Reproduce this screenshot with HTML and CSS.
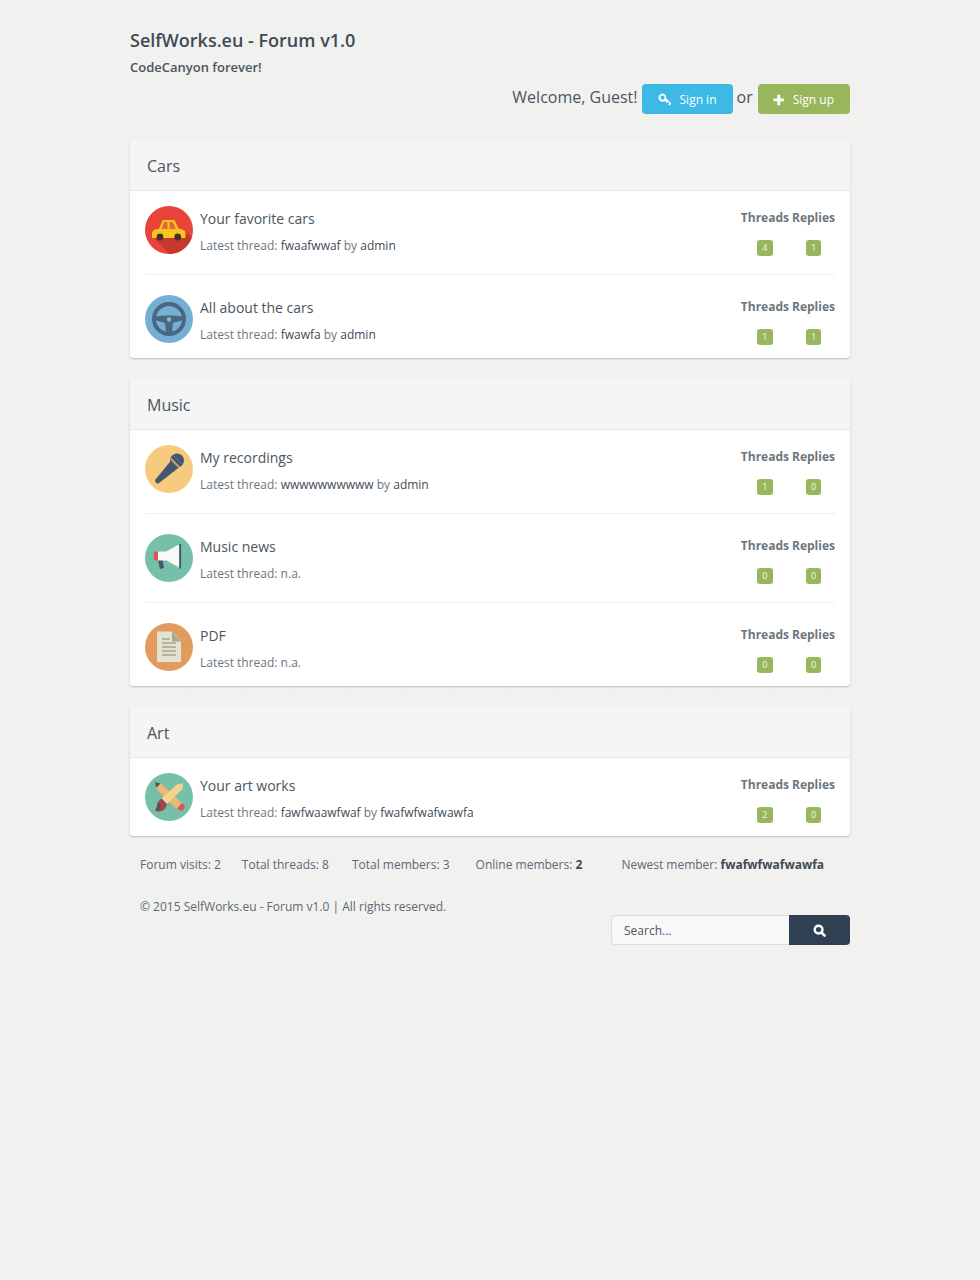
FILE: index.html
```html
<!DOCTYPE html>
<html lang="en">
<head>
<meta charset="utf-8">
<title>SelfWorks.eu - Forum v1.0</title>
<link rel="stylesheet" href="styles.css">
</head>
<body>
<svg class="defs" width="0" height="0" aria-hidden="true">
  <defs>
    <clipPath id="c"><circle cx="24" cy="24" r="24"/></clipPath>
    <symbol id="car" viewBox="0 0 48 48">
      <circle cx="24" cy="24" r="24" fill="#e8443a"/>
      <path clip-path="url(#c)" d="M9 32 L40 26 L50 34 L50 50 L26 50 Z" fill="#c5382f"/>
      <path d="M14 23 L17 15.500 Q17.500 14 19 14 L28 14 Q29.500 14 30 15 L33.500 22.500 L38 23.800 Q40.500 24.500 40.500 27 L40.500 32 L7 32 L7 27 Q7.500 24 10 23.500 Z" fill="#f9c620"/>
      <path d="M19 16 L22.500 16 L22.500 23 L16.500 23 Z M24.500 16 L27.800 16 L31 23 L24.500 23 Z" fill="#e8653a"/>
      <circle cx="15" cy="31" r="3.400" fill="#4a2d2d"/>
      <circle cx="32.700" cy="31" r="3.400" fill="#4a2d2d"/>
    </symbol>
    <symbol id="wheel" viewBox="0 0 48 48">
      <circle cx="24" cy="24" r="24" fill="#75afd4"/>
      <circle cx="24" cy="24" r="15" fill="none" stroke="#4b6585" stroke-width="4"/>
      <path d="M10 21.500 Q24 19.500 38 21.500 L38 25 L28 28 L27 38 L21 38 L20 28 L10 25 Z" fill="#4b6585"/>
      <circle cx="24" cy="24.500" r="2.200" fill="#7cc3ae"/>
    </symbol>
    <symbol id="mic" viewBox="0 0 48 48">
      <circle cx="24" cy="24" r="24" fill="#f6cb80"/>
      <path d="M26.500 15 L34 22.500 L14 38 Q12.500 39 11.500 38 L10.500 37 Q9.500 36 10.500 34.500 Z" fill="#47566f"/>
      <circle cx="32" cy="15.500" r="7" fill="#47566f"/>
      <path d="M25.500 13.500 L34 22" stroke="#c8a27a" stroke-width="1.800" fill="none"/>
      <path d="M28.500 10.500 L37 19" stroke="#67738a" stroke-width="1" fill="none"/>
    </symbol>
    <symbol id="horn" viewBox="0 0 48 48">
      <circle cx="24" cy="24" r="24" fill="#76c0aa"/>
      <path d="M13 26 L17.500 26 L19 34 L15 35 Z" fill="#47566f"/>
      <path d="M9 18 L13 17.500 L13 26.500 L9 26 Q8 22 9 18 Z" fill="#d9575c"/>
      <path d="M13 17.500 L21 17.500 L34 10.500 L34 34 L22 26.500 L13 26.500 Z" fill="#f8f8f4"/>
      <path d="M35.200 10 L35.200 34.500" stroke="#47566f" stroke-width="1.800" fill="none"/>
      <path d="M22 26.500 Q28 31 34 32 L34 34 Z" fill="#c9d2cc"/>
    </symbol>
    <symbol id="doc" viewBox="0 0 48 48">
      <circle cx="24" cy="24" r="24" fill="#e39a5e"/>
      <path d="M12 8.500 L27 8.500 L36 18.500 L36 39 L12 39 Z" fill="#e4e2d0"/>
      <path d="M27 8.500 L36 18.500 L27 18.500 Z" fill="#a8a898"/>
      <path d="M27 8.500 L36 18.500 L31 12.500 Z" fill="#f7f6ec"/>
      <path d="M17 16 L25 16 M17 20 L31 20 M17 24 L31 24 M17 28 L31 28 M17 32 L31 32" stroke="#a3a593" stroke-width="1.300" fill="none"/>
    </symbol>
    <symbol id="art" viewBox="0 0 48 48">
      <circle cx="24" cy="24" r="24" fill="#76c0aa"/>
      <path d="M10 9 L16 10.500 L37 30 L31.500 36 L11 15.500 Z" fill="#eeb873"/>
      <path d="M10 9 L15.500 10.500 L11 15 Z" fill="#47566f"/>
      <path d="M32 35.500 L37 30 L40 33 Q39.500 36 37.500 37.500 Q35 38 32 35.500 Z" fill="#cf5a50"/>
      <path d="M38 10.500 L37.500 16 L22 31 L16.500 25.500 L32 11.500 Z" fill="#f4d488"/>
      <path d="M16.500 25.500 L22 31 Q21 37 15 38.500 Q10 39 10.500 37 Q12.500 34 12.500 30 Q13.500 27 16.500 25.500 Z" fill="#a5424c"/>
      <path d="M10.500 37 Q12.500 34 12.500 30 L16 32 Q15.500 37.500 10.500 37 Z" fill="#47566f"/>
    </symbol>
  </defs>
</svg>
<div class="page">
  <header class="site-head">
    <h1 class="site-title">SelfWorks.eu - Forum v1.0</h1>
    <p class="site-sub">CodeCanyon forever!</p>
    <div class="welcome">
      <span>Welcome, Guest!</span>
      <a class="btn btn-blue">
        <svg class="btn-icon" viewBox="0 0 14 14"><path d="M4.600 0.500 a4.100 4.100 0 1 0 2.300 7.500 l2 2 1.300 -1.300 1.100 1.100 -1.200 1.300 1.300 1.300 2 -2 L8 4.900 A4.100 4.100 0 0 0 4.600 0.500 Z M4.500 2.500 a2.100 2.100 0 1 1 0 4.200 a2.100 2.100 0 0 1 0 -4.200 Z" fill="#fff" fill-rule="evenodd"/></svg>
        Sign in
      </a>
      <span>or</span>
      <a class="btn btn-green">
        <svg class="btn-icon btn-icon-plus" viewBox="0 0 14 14"><path d="M5 1 h3.500 v4.200 h4.500 v3.400 h-4.500 v4.400 h-3.500 v-4.400 h-4.500 v-3.400 h4.500 Z" fill="#fff"/></svg>
        Sign up
      </a>
    </div>
  </header>

  <section class="panel">
    <h2 class="panel-head">Cars</h2>
    <div class="panel-body">
      <article class="row">
        <svg class="avatar"><use href="#car"/></svg>
        <div class="info">
          <h3 class="row-title">Your favorite cars</h3>
          <p class="latest">Latest thread: <a>fwaafwwaf</a> by <a>admin</a></p>
        </div>
        <div class="counts">
          <div class="count count-t"><b>Threads</b><span class="badge">4</span></div>
          <div class="count"><b>Replies</b><span class="badge">1</span></div>
        </div>
      </article>
      <article class="row">
        <svg class="avatar"><use href="#wheel"/></svg>
        <div class="info">
          <h3 class="row-title">All about the cars</h3>
          <p class="latest">Latest thread: <a>fwawfa</a> by <a>admin</a></p>
        </div>
        <div class="counts">
          <div class="count count-t"><b>Threads</b><span class="badge">1</span></div>
          <div class="count"><b>Replies</b><span class="badge">1</span></div>
        </div>
      </article>
    </div>
  </section>

  <section class="panel">
    <h2 class="panel-head">Music</h2>
    <div class="panel-body">
      <article class="row">
        <svg class="avatar"><use href="#mic"/></svg>
        <div class="info">
          <h3 class="row-title">My recordings</h3>
          <p class="latest">Latest thread: <a>wwwwwwwwww</a> by <a>admin</a></p>
        </div>
        <div class="counts">
          <div class="count count-t"><b>Threads</b><span class="badge">1</span></div>
          <div class="count"><b>Replies</b><span class="badge">0</span></div>
        </div>
      </article>
      <article class="row">
        <svg class="avatar"><use href="#horn"/></svg>
        <div class="info">
          <h3 class="row-title">Music news</h3>
          <p class="latest">Latest thread: n.a.</p>
        </div>
        <div class="counts">
          <div class="count count-t"><b>Threads</b><span class="badge">0</span></div>
          <div class="count"><b>Replies</b><span class="badge">0</span></div>
        </div>
      </article>
      <article class="row">
        <svg class="avatar"><use href="#doc"/></svg>
        <div class="info">
          <h3 class="row-title">PDF</h3>
          <p class="latest">Latest thread: n.a.</p>
        </div>
        <div class="counts">
          <div class="count count-t"><b>Threads</b><span class="badge">0</span></div>
          <div class="count"><b>Replies</b><span class="badge">0</span></div>
        </div>
      </article>
    </div>
  </section>

  <section class="panel">
    <h2 class="panel-head">Art</h2>
    <div class="panel-body">
      <article class="row">
        <svg class="avatar"><use href="#art"/></svg>
        <div class="info">
          <h3 class="row-title">Your art works</h3>
          <p class="latest">Latest thread: <a>fawfwaawfwaf</a> by <a>fwafwfwafwawfa</a></p>
        </div>
        <div class="counts">
          <div class="count count-t"><b>Threads</b><span class="badge">2</span></div>
          <div class="count"><b>Replies</b><span class="badge">0</span></div>
        </div>
      </article>
    </div>
  </section>

  <footer class="foot">
    <ul class="stats">
      <li>Forum visits: 2</li>
      <li>Total threads: 8</li>
      <li>Total members: 3</li>
      <li>Online members: <b>2</b></li>
      <li class="newest">Newest member: <b>fwafwfwafwawfa</b></li>
    </ul>
    <p class="copy">© 2015 SelfWorks.eu - Forum v1.0 | All rights reserved.</p>
    <form class="search">
      <input class="search-input" type="text" placeholder="Search...">
      <button class="search-btn" type="button" aria-label="Search">
        <svg class="search-icon" viewBox="0 0 14 14"><circle cx="6" cy="6" r="4.200" fill="none" stroke="#fff" stroke-width="2.600"/><path d="M9 9 L12.500 12.500" stroke="#fff" stroke-width="2.800" stroke-linecap="round"/></svg>
      </button>
    </form>
  </footer>
</div>
</body>
</html>
```

FILE: styles.css
```css
* { box-sizing: border-box; }
html, body { margin: 0; padding: 0; }
body {
  min-height: 1280px;
  background-color: #f1f1ef;
  background-image:
    radial-gradient(circle at 30% 40%, rgba(120, 120, 110, .08) 0, rgba(120, 120, 110, 0) 1.500px),
    radial-gradient(circle at 70% 20%, rgba(120, 120, 110, .06) 0, rgba(120, 120, 110, 0) 1.200px),
    radial-gradient(circle at 55% 65%, rgba(120, 120, 110, .04) 0, rgba(120, 120, 110, 0) 1px);
  background-size: 197px 163px, 131px 211px, 53px 47px;
  font-family: "Open Sans", "Liberation Sans", sans-serif;
  color: #4a5560;
}
.defs { position: absolute; }
.page { width: 720px; margin: 0 auto; padding-top: 28px; }
.site-title { margin: 0; font-size: 18px; line-height: 25px; font-weight: 600; color: #3f4b57; }
.site-sub { margin: 5px 0 0; font-size: 13px; line-height: 18px; font-weight: 600; color: #4a5560; }
.welcome {
  display: flex;
  justify-content: flex-end;
  align-items: flex-start;
  gap: 4px;
  margin-top: 8px;
  font-size: 16px;
  line-height: 26px;
  color: #4a5560;
}
.btn {
  display: flex;
  align-items: center;
  height: 30px;
  padding: 1px 16px 0;
  border-radius: 4px;
  color: #fff;
  font-size: 12px;
}
.btn-blue { background: #3db9e6; }
.btn-green { background: #98b65c; padding-left: 15px; margin-left: 1px; }
.btn-icon { width: 14px; height: 14px; margin-right: 8px; }
.btn-icon-plus { width: 12px; height: 12px; }
.panel {
  margin-top: 21px;
  background: #fff;
  border-radius: 4px;
  box-shadow: 0 1px 2px rgba(0, 0, 0, .22);
  overflow: hidden;
}
.site-head + .panel { margin-top: 26px; }
.panel-head {
  margin: 0;
  height: 51px;
  padding: 0 17px;
  background: #f5f5f5;
  border-bottom: 1px solid #e6e6e6;
  font-size: 16px;
  font-weight: 400;
  line-height: 52px;
  color: #4a5560;
}
.panel-body { padding: 0 15px; }
.row {
  display: flex;
  align-items: flex-start;
  height: 84px;
  padding-top: 15px;
  border-bottom: 1px solid #efefef;
}
.row + .row { height: 89px; padding-top: 20px; }
.row:last-child { border-bottom: 0; height: 78px; }
.row + .row:last-child { height: 83px; }
.avatar { width: 48px; height: 48px; flex: none; }
.info { flex: 1; margin-left: 7px; }
.row-title { margin: 0; padding-top: 2px; font-size: 14px; line-height: 22px; font-weight: 400; color: #4a5560; }
.latest { margin: 7px 0 0; font-size: 12px; line-height: 18px; color: #6b7680; }
.latest a { color: #3f4b57; }
.counts { display: flex; gap: 3px; }
.count { display: flex; flex-direction: column; align-items: center; }
.count b { font-size: 12px; line-height: 24px; height: 24px; font-weight: 700; color: #6b7680; }
.badge {
  margin-top: 10px;
  display: block;
  min-width: 15px;
  height: 16px;
  padding: 0 5px;
  background: #98b65c;
  border-radius: 3px;
  color: #f4f7ea;
  font-size: 9px;
  line-height: 16px;
  text-align: center;
}
.count-t .badge { min-width: 16px; }
.foot { position: relative; padding: 0 10px; font-size: 12px; color: #5d6873; }
.stats { display: flex; margin: 20px 0 0; padding: 0; list-style: none; line-height: 18px; }
.stats li:nth-child(1) { margin-right: 21px; }
.stats li:nth-child(2) { margin-right: 23px; }
.stats li:nth-child(3) { margin-right: 26px; }
.stats li:nth-child(4) { margin-right: 39px; }
.stats b { color: #3f4b57; }
.copy { margin: 24px 0 0; line-height: 18px; }
.search { display: flex; justify-content: flex-end; margin: -1px -10px 0 0; }
.search-input {
  width: 178px;
  height: 30px;
  padding: 0 12px;
  border: 1px solid #dcdcdc;
  border-right: 0;
  border-radius: 4px 0 0 4px;
  background: #f9f9f9;
  font: 12px "Open Sans", sans-serif;
  color: #4a5560;
}
.search-input::placeholder { color: #4a5560; opacity: 1; }
.search-btn {
  display: flex;
  align-items: center;
  justify-content: center;
  width: 61px;
  height: 30px;
  padding: 0;
  border: 0;
  border-radius: 0 4px 4px 0;
  background: #2f4052;
}
.search-icon { width: 13px; height: 13px; }
```
